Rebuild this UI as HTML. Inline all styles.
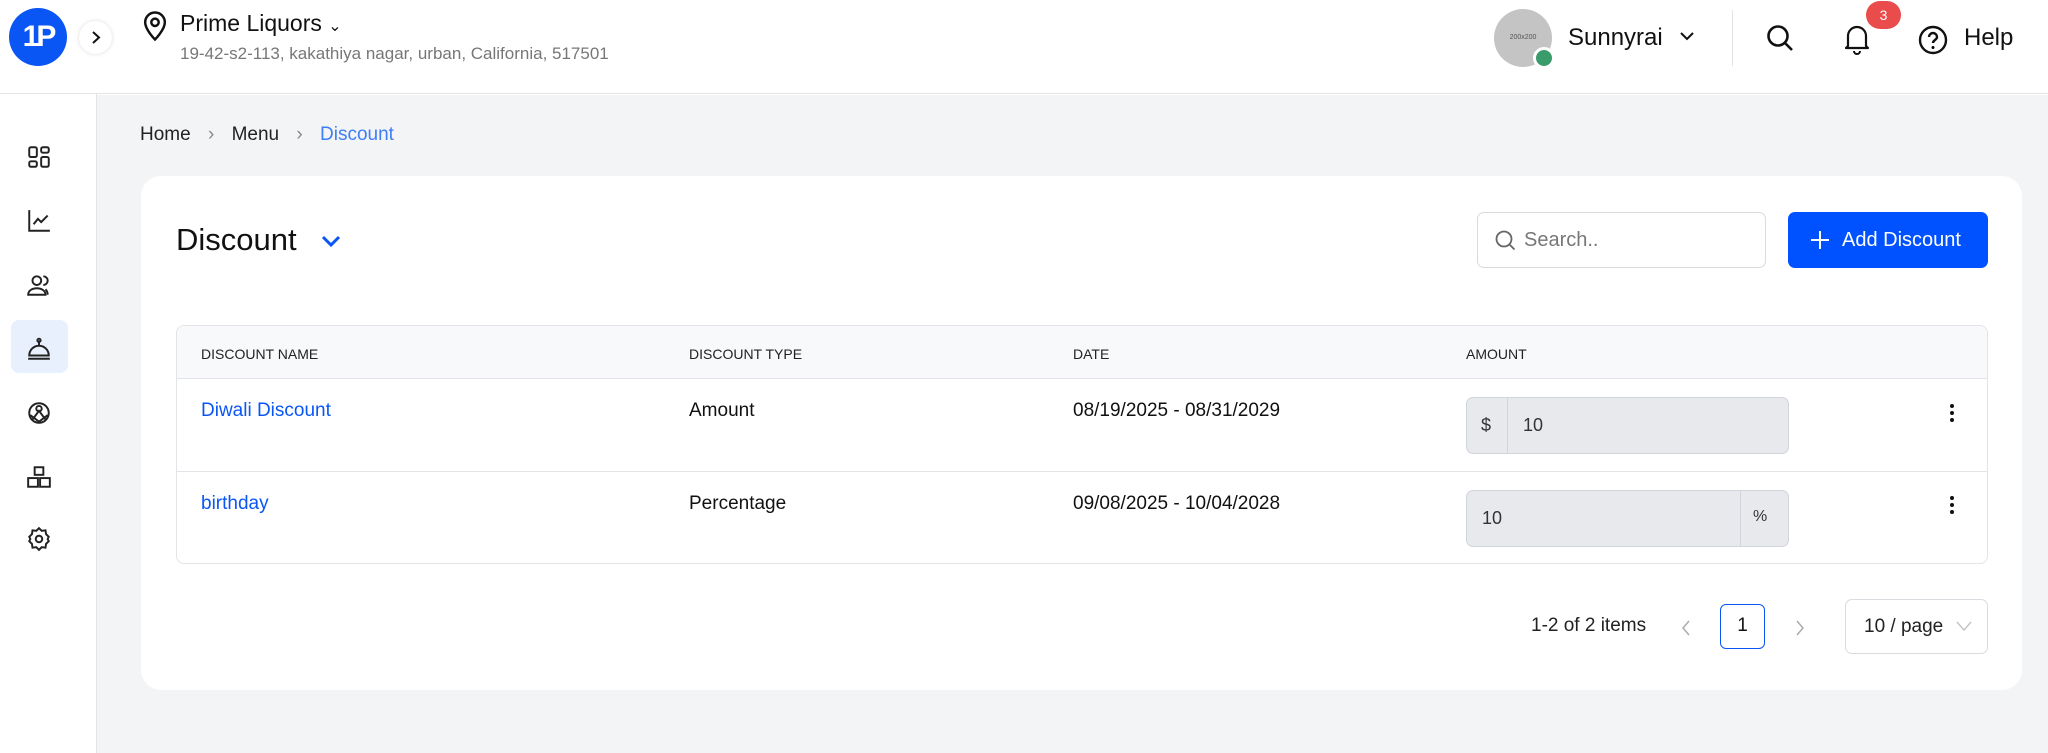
<!DOCTYPE html>
<html><head><meta charset="utf-8"><style>
*{box-sizing:border-box;margin:0;padding:0}
body{width:2048px;height:753px;overflow:hidden;background:#fff;font-family:"Liberation Sans",sans-serif;color:#111;position:relative}
.abs{position:absolute}
.hdr{left:0;top:0;width:2048px;height:94px;background:#fff;border-bottom:1px solid #e3e4e7}
.side{left:0;top:94px;width:97px;height:659px;background:#fff;border-right:1px solid #e3e4e7}
.main{left:97px;top:95px;width:1951px;height:658px;background:#f3f4f6}
.card{left:141px;top:176px;width:1881px;height:514px;background:#fff;border-radius:20px}
.tbl{left:176px;top:325px;width:1812px;height:239px;border:1px solid #e3e4e7;border-radius:8px;overflow:hidden}
.th{font-size:14px;color:#222;top:20px}
.inp{border:1px solid #d1d5db;background:#e8e9ec;border-radius:7px;height:57px;width:323px}
.blue{color:#0a56f5}
svg{display:block}
</style></head><body>
<div class="abs hdr"></div>
<div class="abs" style="left:9px;top:8px;width:58px;height:58px;border-radius:50%;background:#0a56f5;color:#fff;font-weight:bold;font-size:30px;text-align:center;line-height:58px;letter-spacing:-3px">1P</div>
<div class="abs" style="left:79px;top:21px;width:33px;height:33px;border-radius:50%;background:#fff;box-shadow:0 0 4px rgba(0,0,0,.15)"><svg width="33" height="33"><path d="M14 11l6 5.5-6 5.5" fill="none" stroke="#111" stroke-width="2"/></svg></div>
<svg class="abs" style="left:140px;top:10px" width="30" height="32" viewBox="0 0 24 26"><path d="M12 24s-8-8-8-14a8 8 0 0116 0c0 6-8 14-8 14z" fill="none" stroke="#111" stroke-width="2"/><circle cx="12" cy="10" r="3" fill="none" stroke="#111" stroke-width="2"/></svg>
<div class="abs" style="left:180px;top:10px;font-size:23px;color:#111">Prime Liquors <span style="font-size:16px">&#8964;</span></div>
<div class="abs" style="left:180px;top:44px;font-size:17px;color:#777">19-42-s2-113, kakathiya nagar, urban, California, 517501</div>
<div class="abs" style="left:1494px;top:9px;width:58px;height:58px;border-radius:50%;background:#c4c4c4;font-size:7px;color:#555;text-align:center;line-height:58px">200x200</div>
<div class="abs" style="left:1533px;top:47px;width:22px;height:22px;border-radius:50%;background:#3a9b6b;border:3px solid #fff"></div>
<div class="abs" style="left:1568px;top:24px;font-size:24px;color:#111">Sunnyrai</div>
<svg class="abs" style="left:1678px;top:29px" width="18" height="14"><path d="M3 4l6 6 6-6" fill="none" stroke="#111" stroke-width="2"/></svg>
<div class="abs" style="left:1732px;top:10px;width:1px;height:56px;background:#e3e4e7"></div>
<svg class="abs" style="left:1765px;top:23px" width="30" height="30"><circle cx="13" cy="13" r="9.5" fill="none" stroke="#111" stroke-width="2.6"/><path d="M20 20l7 7" stroke="#111" stroke-width="2.6"/></svg>
<svg class="abs" style="left:1842px;top:22px" width="30" height="34"><path d="M6 24V14a9 9 0 0118 0v10l2 2H4z" fill="none" stroke="#111" stroke-width="2.2" stroke-linejoin="round"/><path d="M12 29a3 3 0 006 0" fill="none" stroke="#111" stroke-width="2"/></svg>
<div class="abs" style="left:1866px;top:1px;width:35px;height:28px;border-radius:14px;background:#ea4c4c;color:#fff;font-size:14px;text-align:center;line-height:28px">3</div>
<svg class="abs" style="left:1917px;top:24px" width="32" height="32"><circle cx="16" cy="16" r="13" fill="none" stroke="#111" stroke-width="2.4"/><path d="M12 13a4 4 0 118 0c0 3-4 3-4 6" fill="none" stroke="#111" stroke-width="2.4"/><circle cx="16" cy="23.5" r="1.5"/></svg>
<div class="abs" style="left:1964px;top:24px;font-size:24px;color:#111">Help</div>

<div class="abs side"></div>
<div class="abs" style="left:11px;top:320px;width:57px;height:53px;border-radius:8px;background:#e8f0fd"></div>
<svg class="abs" style="left:26px;top:144px" width="26" height="26" viewBox="0 0 24 24" fill="none" stroke="#222" stroke-width="1.8"><rect x="3" y="3" width="7" height="9" rx="1.5"/><rect x="14" y="3" width="7" height="5" rx="1.5"/><rect x="3" y="16" width="7" height="5" rx="1.5"/><rect x="14" y="12" width="7" height="9" rx="1.5"/></svg>
<svg class="abs" style="left:26px;top:208px" width="26" height="26" viewBox="0 0 24 24" fill="none" stroke="#222" stroke-width="1.8"><path d="M3 2v19h19M7 15l4-5 3 3 6-6"/></svg>
<svg class="abs" style="left:26px;top:272px" width="26" height="26" viewBox="0 0 24 24" fill="none" stroke="#222" stroke-width="1.8"><circle cx="10" cy="8" r="4"/><path d="M2 21c0-4 4-6 8-6s8 2 8 6zM16 4a4 4 0 010 8M20 21c0-2-1-4-2-5"/></svg>
<svg class="abs" style="left:26px;top:336px" width="26" height="26" viewBox="0 0 24 24" fill="none" stroke="#222" stroke-width="1.8"><path d="M3 18a9 9 0 0118 0zM2 21h20M12 4v5"/><circle cx="12" cy="4" r="1.5"/></svg>
<svg class="abs" style="left:26px;top:400px" width="26" height="26" viewBox="0 0 24 24" fill="none" stroke="#222" stroke-width="1.8"><circle cx="12" cy="12" r="9"/><circle cx="12" cy="8" r="2.5"/><path d="M6 18l6-8 6 8M4 14l8 6 8-6"/></svg>
<svg class="abs" style="left:26px;top:464px" width="26" height="26" viewBox="0 0 24 24" fill="none" stroke="#222" stroke-width="1.8"><rect x="8" y="3" width="8" height="7"/><rect x="2" y="13" width="9" height="8"/><rect x="13" y="13" width="9" height="8"/></svg>
<svg class="abs" style="left:26px;top:526px" width="26" height="26" viewBox="0 0 24 24" fill="none" stroke="#222" stroke-width="1.8"><circle cx="12" cy="12" r="3"/><path d="M12 2l2.5 2.5 3.5-.5.5 3.5L21 10l-1 2 1 2-2.5 2.5-.5 3.5-3.5-.5L12 22l-2.5-2.5-3.5.5-.5-3.5L3 14l1-2-1-2 2.5-2.5.5-3.5 3.5.5z"/></svg>

<div class="abs main"></div>
<div class="abs" style="left:140px;top:124px;font-size:19px;color:#222">Home <span style="color:#888;margin:0 12px">&#8250;</span> Menu <span style="color:#888;margin:0 12px">&#8250;</span> <span style="color:#3f7ef5">Discount</span></div>
<div class="abs card"></div>
<div class="abs" style="left:176px;top:222px;font-size:31px;color:#111">Discount</div>
<svg class="abs" style="left:320px;top:233px" width="22" height="16"><path d="M3 4l8 8 8-8" fill="none" stroke="#0a56f5" stroke-width="3"/></svg>
<div class="abs" style="left:1477px;top:212px;width:289px;height:56px;border:1px solid #d9dbe0;border-radius:7px"></div>
<svg class="abs" style="left:1494px;top:229px" width="24" height="24"><circle cx="10" cy="10" r="7.5" fill="none" stroke="#666" stroke-width="1.8"/><path d="M15.5 15.5l5 5" stroke="#666" stroke-width="1.8"/></svg>
<div class="abs" style="left:1524px;top:229px;font-size:20px;color:#777">Search..</div>
<div class="abs" style="left:1788px;top:212px;width:200px;height:56px;background:#0051ff;border-radius:7px;color:#fff;font-size:20px;line-height:56px;padding-left:54px">Add Discount</div>
<svg class="abs" style="left:1810px;top:230px" width="20" height="20"><path d="M10 1v18M1 10h18" stroke="#fff" stroke-width="2"/></svg>

<div class="abs tbl">
 <div class="abs" style="left:0;top:0;width:1812px;height:53px;background:#f8f9fa;border-bottom:1px solid #e3e4e7"></div>
 <div class="abs th" style="left:24px">DISCOUNT NAME</div>
 <div class="abs th" style="left:512px">DISCOUNT TYPE</div>
 <div class="abs th" style="left:896px">DATE</div>
 <div class="abs th" style="left:1289px">AMOUNT</div>
 <div class="abs" style="left:0;top:145px;width:1812px;height:1px;background:#e3e4e7"></div>
 <div class="abs blue" style="left:24px;top:74px;font-size:19px">Diwali Discount</div>
 <div class="abs" style="left:512px;top:74px;font-size:19px">Amount</div>
 <div class="abs" style="left:896px;top:74px;font-size:19px">08/19/2025 - 08/31/2029</div>
 <div class="abs inp" style="left:1289px;top:71px"><div class="abs" style="left:40px;top:0;width:1px;height:55px;background:#d1d5db"></div><div class="abs" style="left:14px;top:17px;font-size:18px;color:#333">$</div><div class="abs" style="left:56px;top:17px;font-size:18px;color:#333">10</div></div>
 <div class="abs blue" style="left:24px;top:167px;font-size:19px">birthday</div>
 <div class="abs" style="left:512px;top:167px;font-size:19px">Percentage</div>
 <div class="abs" style="left:896px;top:167px;font-size:19px">09/08/2025 - 10/04/2028</div>
 <div class="abs inp" style="left:1289px;top:164px"><div class="abs" style="left:273px;top:0;width:1px;height:55px;background:#d1d5db"></div><div class="abs" style="left:15px;top:17px;font-size:18px;color:#333">10</div><div class="abs" style="left:286px;top:17px;font-size:16px;color:#333">%</div></div>
 <div class="abs" style="left:1773px;top:78px;width:5px;font-size:0"><div style="width:4px;height:4px;border-radius:50%;background:#111;margin-bottom:3px"></div><div style="width:4px;height:4px;border-radius:50%;background:#111;margin-bottom:3px"></div><div style="width:4px;height:4px;border-radius:50%;background:#111"></div></div>
 <div class="abs" style="left:1773px;top:170px;width:5px;font-size:0"><div style="width:4px;height:4px;border-radius:50%;background:#111;margin-bottom:3px"></div><div style="width:4px;height:4px;border-radius:50%;background:#111;margin-bottom:3px"></div><div style="width:4px;height:4px;border-radius:50%;background:#111"></div></div>
</div>

<div class="abs" style="left:1531px;top:615px;font-size:19px;color:#222">1-2 of 2 items</div>
<svg class="abs" style="left:1678px;top:618px" width="16" height="20"><path d="M11 3l-6 7 6 7" fill="none" stroke="#aaa" stroke-width="1.5"/></svg>
<div class="abs" style="left:1720px;top:604px;width:45px;height:45px;border:1.5px solid #0a56f5;border-radius:6px;text-align:center;line-height:42px;font-size:19px">1</div>
<svg class="abs" style="left:1792px;top:618px" width="16" height="20"><path d="M5 3l6 7-6 7" fill="none" stroke="#aaa" stroke-width="1.5"/></svg>
<div class="abs" style="left:1845px;top:599px;width:143px;height:55px;border:1px solid #d9dbe0;border-radius:7px;font-size:19px;line-height:53px;padding-left:18px;color:#222">10 / page</div>
<svg class="abs" style="left:1955px;top:619px" width="18" height="14"><path d="M2 3l7 8 7-8" fill="none" stroke="#bbb" stroke-width="1.3"/></svg>
</body></html>
